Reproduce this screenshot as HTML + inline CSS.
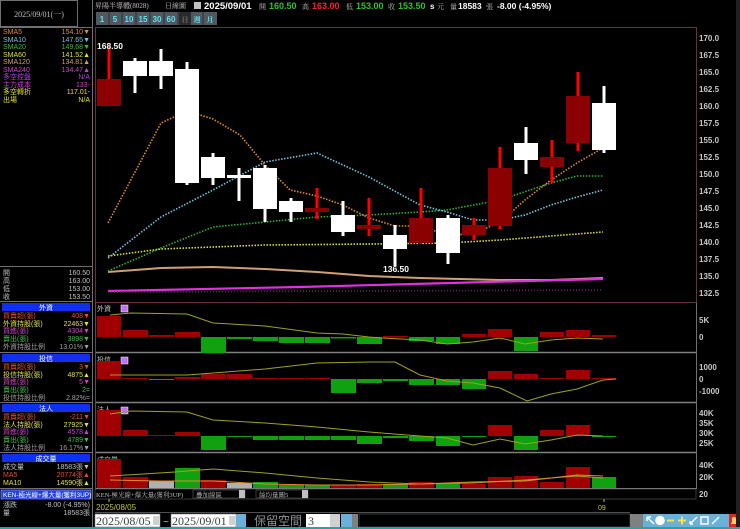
<!DOCTYPE html>
<html><head><meta charset="utf-8"><style>
html,body{margin:0;padding:0;background:#000;width:740px;height:529px;overflow:hidden}
svg{display:block}
text{font-family:"Liberation Sans","Noto Sans CJK TC",sans-serif}
.s{font-family:"Liberation Serif","Noto Serif CJK SC",serif;font-size:7px}
.ax{font-size:8px;font-weight:bold;fill:#c8c8c8}
</style></head><body>
<svg width="740" height="529" viewBox="0 0 740 529" xmlns="http://www.w3.org/2000/svg">
<rect width="740" height="529" fill="#000"/>
<!-- LEFT PANEL -->
<rect x="0.5" y="0.5" width="77" height="26" fill="#000" stroke="#707070"/>
<text x="39" y="17" class="s" fill="#c0c0c0" text-anchor="middle" style="font-size:8px">2025/09/01(一)</text>
<line x1="92.5" y1="0" x2="92.5" y2="529" stroke="#707070"/>
<line x1="0" y1="27.5" x2="92" y2="27.5" stroke="#707070"/>
<g class="s">
<text x="3" y="34" fill="#e08a2a">SMA5</text><text x="90" y="34" fill="#e08a2a" text-anchor="end">154.10▼</text>
<text x="3" y="42" fill="#6ec5e0">SMA10</text><text x="90" y="42" fill="#6ec5e0" text-anchor="end">147.65▼</text>
<text x="3" y="49" fill="#2ec02e">SMA20</text><text x="90" y="49" fill="#2ec02e" text-anchor="end">149.68▼</text>
<text x="3" y="57" fill="#e0e030">SMA60</text><text x="90" y="57" fill="#e0e030" text-anchor="end">141.52▲</text>
<text x="3" y="64" fill="#d0a070">SMA120</text><text x="90" y="64" fill="#d0a070" text-anchor="end">134.81▲</text>
<text x="3" y="72" fill="#d040d0">SMA240</text><text x="90" y="72" fill="#d040d0" text-anchor="end">134.47▲</text>
<text x="3" y="79" fill="#b040e0">多空控盤</text><text x="90" y="79" fill="#b040e0" text-anchor="end">N/A</text>
<text x="3" y="87" fill="#d040d0">主力成本</text><text x="90" y="87" fill="#d040d0" text-anchor="end">133-</text>
<text x="3" y="94" fill="#e0e030">多空轉折</text><text x="90" y="94" fill="#e0e030" text-anchor="end">117.01-</text>
<text x="3" y="102" fill="#e0e030">出場</text><text x="90" y="102" fill="#e0e030" text-anchor="end">N/A</text>
</g>
<line x1="0" y1="266.5" x2="92" y2="266.5" stroke="#707070"/>
<g class="s" fill="#c0c0c0">
<text x="3" y="275">開</text><text x="90" y="275" text-anchor="end">160.50</text>
<text x="3" y="283">高</text><text x="90" y="283" text-anchor="end">163.00</text>
<text x="3" y="291">低</text><text x="90" y="291" text-anchor="end">153.00</text>
<text x="3" y="299">收</text><text x="90" y="299" text-anchor="end">153.50</text>
</g>
<g class="s">
<line x1="0" y1="301.5" x2="92" y2="301.5" stroke="#707070"/>
<rect x="2" y="303" width="88" height="8" fill="#1030f0"/><text x="46" y="310" fill="#fff" text-anchor="middle">外資</text>
<text x="3" y="318" fill="#e05030">買賣超(張)</text><text x="90" y="318" fill="#e05030" text-anchor="end">408▼</text>
<text x="3" y="326" fill="#e0e040">外資持股(張)</text><text x="90" y="326" fill="#e0e040" text-anchor="end">22463▼</text>
<text x="3" y="333" fill="#d040d0">買進(張)</text><text x="90" y="333" fill="#d040d0" text-anchor="end">4304▼</text>
<text x="3" y="341" fill="#40c040">賣出(張)</text><text x="90" y="341" fill="#40c040" text-anchor="end">3898▼</text>
<text x="3" y="349" fill="#a0a0a0">外資持股比例</text><text x="90" y="349" fill="#a0a0a0" text-anchor="end">13.01%▼</text>
<line x1="0" y1="352.5" x2="92" y2="352.5" stroke="#707070"/>
<rect x="2" y="354" width="88" height="8" fill="#1030f0"/><text x="46" y="361" fill="#fff" text-anchor="middle">投信</text>
<text x="3" y="369" fill="#e05030">買賣超(張)</text><text x="90" y="369" fill="#e05030" text-anchor="end">3▼</text>
<text x="3" y="377" fill="#e0e040">投信持股(張)</text><text x="90" y="377" fill="#e0e040" text-anchor="end">4875▲</text>
<text x="3" y="384" fill="#d040d0">買進(張)</text><text x="90" y="384" fill="#d040d0" text-anchor="end">5▼</text>
<text x="3" y="392" fill="#40c040">賣出(張)</text><text x="90" y="392" fill="#40c040" text-anchor="end">2=</text>
<text x="3" y="400" fill="#a0a0a0">投信持股比例</text><text x="90" y="400" fill="#a0a0a0" text-anchor="end">2.82%=</text>
<line x1="0" y1="402.5" x2="92" y2="402.5" stroke="#707070"/>
<rect x="2" y="404" width="88" height="8" fill="#1030f0"/><text x="46" y="411" fill="#fff" text-anchor="middle">法人</text>
<text x="3" y="419" fill="#e05030">買賣超(張)</text><text x="90" y="419" fill="#e05030" text-anchor="end">-211▼</text>
<text x="3" y="427" fill="#e0e040">法人持股(張)</text><text x="90" y="427" fill="#e0e040" text-anchor="end">27925▼</text>
<text x="3" y="434" fill="#d040d0">買進(張)</text><text x="90" y="434" fill="#d040d0" text-anchor="end">4578▲</text>
<text x="3" y="442" fill="#40c040">賣出(張)</text><text x="90" y="442" fill="#40c040" text-anchor="end">4789▼</text>
<text x="3" y="450" fill="#a0a0a0">法人持股比例</text><text x="90" y="450" fill="#a0a0a0" text-anchor="end">16.17%▼</text>
<line x1="0" y1="452.5" x2="92" y2="452.5" stroke="#707070"/>
<rect x="2" y="454" width="88" height="8" fill="#1030f0"/><text x="46" y="461" fill="#fff" text-anchor="middle">成交量</text>
<text x="3" y="469" fill="#c0c0c0">成交量</text><text x="90" y="469" fill="#c0c0c0" text-anchor="end">18583張▼</text>
<text x="3" y="477" fill="#e05030">MA5</text><text x="90" y="477" fill="#e05030" text-anchor="end">20774張▲</text>
<text x="3" y="485" fill="#e0e040">MA10</text><text x="90" y="485" fill="#e0e040" text-anchor="end">14590張▲</text>
<line x1="0" y1="488.5" x2="92" y2="488.5" stroke="#707070"/>
<rect x="1" y="490" width="90" height="9" fill="#2040e0" stroke="#a0a0ff" stroke-width="0.6"/>
<text x="3" y="497" fill="#fff" style="font-size:6.5px">KEN-極光線+爆大量(獲利3UP)</text>
<text x="3" y="507" fill="#c0c0c0">漲跌</text><text x="90" y="507" fill="#c0c0c0" text-anchor="end">-8.00 (-4.95%)</text>
<text x="3" y="515" fill="#c0c0c0">量</text><text x="90" y="515" fill="#c0c0c0" text-anchor="end">18583張</text>
</g>
<!-- TOP BAR -->
<g font-size="8">
<text x="95" y="8" class="s" fill="#c0c0c0">昇陽半導體(8028)</text>
<text x="165" y="8" class="s" fill="#c0c0c0">日線圖</text>
<rect x="194" y="2" width="7" height="7" fill="#c0c0c0"/>
<text x="204" y="9" fill="#fff" font-weight="bold" font-size="9.5">2025/09/01</text>
<text x="259" y="9" class="s" fill="#c0c0c0">開</text><text x="269" y="9" fill="#2ec02e" font-weight="bold" font-size="9">160.50</text>
<text x="302" y="9" class="s" fill="#c0c0c0">高</text><text x="312" y="9" fill="#ff2020" font-weight="bold" font-size="9">163.00</text>
<text x="346" y="9" class="s" fill="#c0c0c0">低</text><text x="356" y="9" fill="#2ec02e" font-weight="bold" font-size="9">153.00</text>
<text x="388" y="9" class="s" fill="#c0c0c0">收</text><text x="398" y="9" fill="#2ec02e" font-weight="bold" font-size="9">153.50</text>
<text x="430" y="9" fill="#fff" font-weight="bold" font-size="8">s</text><text x="437" y="9" class="s" fill="#c0c0c0">元</text>
<text x="450" y="9" class="s" fill="#c0c0c0">量</text><text x="458" y="9" fill="#fff" font-weight="bold" font-size="8.5">18583</text>
<text x="486" y="9" class="s" fill="#c0c0c0">張</text>
<text x="497" y="9" fill="#fff" font-weight="bold" font-size="8.5">-8.00 (-4.95%)</text>
</g>
<g font-size="8" font-weight="bold" text-anchor="middle">
<rect x="96" y="12" width="121" height="13" fill="#505860"/>
<rect x="179" y="12" width="12" height="13" fill="#2a2a2a"/>
<g stroke="#2a3038" stroke-width="1"><line x1="109" y1="12" x2="109" y2="25"/><line x1="122" y1="12" x2="122" y2="25"/><line x1="136" y1="12" x2="136" y2="25"/><line x1="150" y1="12" x2="150" y2="25"/><line x1="164" y1="12" x2="164" y2="25"/><line x1="178" y1="12" x2="178" y2="25"/><line x1="203" y1="12" x2="203" y2="25"/></g>
<text x="102" y="22" fill="#60e0f0">1</text><text x="115" y="22" fill="#60e0f0">5</text><text x="129" y="22" fill="#60e0f0">10</text><text x="143" y="22" fill="#60e0f0">15</text><text x="157" y="22" fill="#60e0f0">30</text><text x="171" y="22" fill="#60e0f0">60</text>
<text x="185" y="22" fill="#707070" class="s">日</text><text x="197" y="22" fill="#60e0f0" class="s">週</text><text x="210" y="22" fill="#60e0f0" class="s">月</text>
</g>
<!-- MAIN CHART FRAME -->
<rect x="95.5" y="27.5" width="601" height="275" fill="none" stroke="#6a3040"/>
<g class="ax">
<text x="699" y="41">170.0</text><text x="699" y="58">167.5</text><text x="699" y="75">165.0</text><text x="699" y="92">162.5</text>
<text x="699" y="109">160.0</text><text x="699" y="126">157.5</text><text x="699" y="143">155.0</text><text x="699" y="160">152.5</text>
<text x="699" y="177">150.0</text><text x="699" y="194">147.5</text><text x="699" y="211">145.0</text><text x="699" y="228">142.5</text>
<text x="699" y="245">140.0</text><text x="699" y="262">137.5</text><text x="699" y="279">135.0</text><text x="699" y="296">132.5</text>
</g>
<g fill="none" stroke-width="1.6">
<polyline stroke="#d0a070" stroke-width="2" points="108,272 161,268 213,267 265,269 317,272 369,276 420,278 500,280 551,280 603,278"/>
<polyline stroke="#e030e0" stroke-width="2.2" points="108,291 300,287 450,283 603,279"/>
<polyline stroke="#702070" stroke-dasharray="1,2" points="108,292 603,290"/>
<polyline stroke="#e0e030" stroke-dasharray="1.5,1.5" points="108,256 161,249 265,245 369,244 447,243 500,240 551,236 603,232"/>
<polyline stroke="#30b030" stroke-dasharray="1.5,1.5" points="108,271 161,248 213,227 265,222 317,217 369,215 420,212 447,210 500,200 551,183 577,176 603,176"/>
<polyline stroke="#6ec5e0" stroke-dasharray="1.5,1.5" points="108,258 161,217 213,190 265,162 317,153 369,177 420,205 447,212 473,220 500,220 525,215 551,205 577,197 603,190"/>
<polyline stroke="#e08a2a" stroke-dasharray="1.5,1.5" points="108,223 161,123 187,111 213,119 240,135 265,165 290,190 317,196 343,205 369,218 395,226 420,226 447,235 473,234 500,222 525,200 551,180 577,163 603,148"/>
</g>
<g>
<rect x="107.5" y="47" width="3" height="32" fill="#f00"/><rect x="97" y="79" width="24" height="27" fill="#8b0000"/>
<rect x="133.5" y="58" width="3" height="35" fill="#fff"/><rect x="123" y="61" width="24" height="15" fill="#fff"/>
<rect x="159.5" y="49" width="3" height="40" fill="#fff"/><rect x="149" y="61" width="24" height="15" fill="#fff"/>
<rect x="185.5" y="62" width="3" height="123" fill="#fff"/><rect x="175" y="69" width="24" height="114" fill="#fff"/>
<rect x="211.5" y="153" width="3" height="32" fill="#fff"/><rect x="201" y="157" width="24" height="21" fill="#fff"/>
<rect x="237.5" y="168" width="3" height="33" fill="#fff"/><rect x="227" y="175" width="24" height="3" fill="#fff"/>
<rect x="263.5" y="165" width="3" height="57" fill="#fff"/><rect x="253" y="168" width="24" height="41" fill="#fff"/>
<rect x="289.5" y="198" width="3" height="24" fill="#fff"/><rect x="279" y="201" width="24" height="11" fill="#fff"/>
<rect x="315.5" y="188" width="3" height="31" fill="#f00"/><rect x="305" y="208" width="24" height="4" fill="#8b0000"/>
<rect x="341.5" y="201" width="3" height="35" fill="#fff"/><rect x="331" y="215" width="24" height="17" fill="#fff"/>
<rect x="367.5" y="198" width="3" height="38" fill="#f00"/><rect x="357" y="225" width="24" height="4" fill="#8b0000"/>
<rect x="393.5" y="225" width="3" height="41" fill="#fff"/><rect x="383" y="235" width="24" height="14" fill="#fff"/>
<rect x="419.5" y="188" width="3" height="56" fill="#f00"/><rect x="409" y="218" width="24" height="25" fill="#8b0000"/>
<rect x="446.5" y="215" width="3" height="49" fill="#fff"/><rect x="436" y="218" width="24" height="35" fill="#fff"/>
<rect x="472.5" y="218" width="3" height="22" fill="#f00"/><rect x="462" y="225" width="24" height="10" fill="#8b0000"/>
<rect x="498.5" y="147" width="3" height="82" fill="#f00"/><rect x="488" y="168" width="24" height="58" fill="#8b0000"/>
<rect x="524.5" y="127" width="3" height="47" fill="#fff"/><rect x="514" y="143" width="24" height="17" fill="#fff"/>
<rect x="550.5" y="140" width="3" height="43" fill="#f00"/><rect x="540" y="157" width="24" height="10" fill="#8b0000"/>
<rect x="576.5" y="72" width="3" height="79" fill="#f00"/><rect x="566" y="96" width="24" height="47" fill="#8b0000"/>
<rect x="602.5" y="86" width="3" height="67" fill="#fff"/><rect x="592" y="103" width="24" height="47" fill="#fff"/>
</g>
<text x="97" y="49" fill="#fff" font-size="8.5" font-weight="bold">168.50</text>
<text x="383" y="272" fill="#fff" font-size="8.5" font-weight="bold">136.50</text>
<g stroke="#808080" stroke-width="1.5">
<line x1="95" y1="352.5" x2="697" y2="352.5"/><line x1="95" y1="402.5" x2="697" y2="402.5"/><line x1="95" y1="452.5" x2="697" y2="452.5"/>
</g>
<line x1="95" y1="488.5" x2="697" y2="488.5" stroke="#808080"/>
<line x1="696.5" y1="303" x2="696.5" y2="489" stroke="#707070"/>
<line x1="95.5" y1="303" x2="95.5" y2="489" stroke="#505050"/>
<g class="ax">
<text x="699" y="323">5K</text><text x="699" y="340">0</text>
<text x="699" y="370">1000</text><text x="699" y="382">0</text><text x="699" y="394">-1000</text>
<text x="699" y="416">40K</text><text x="699" y="426">35K</text><text x="699" y="436">30K</text><text x="699" y="446">25K</text>
<text x="699" y="468">40K</text><text x="699" y="480">20K</text><text x="699" y="497">20</text>
</g>
<g class="s" fill="#c0c0c0"><text x="97" y="311">外資</text><text x="97" y="362">投信</text><text x="97" y="412">法人</text><text x="97" y="462">成交量</text></g>
<g fill="#c070f0" stroke="#fff" stroke-width="0.5"><rect x="121" y="305" width="7" height="7"/><rect x="121" y="357" width="7" height="7"/><rect x="121" y="407" width="7" height="7"/></g>
<g fill="#a00000">
<rect x="97" y="316" width="24" height="21"/><rect x="123" y="330" width="25" height="7"/><rect x="149" y="335" width="25" height="2"/><rect x="175" y="332" width="25" height="5"/>
<rect x="383" y="336" width="25" height="1.5"/><rect x="462" y="334" width="24" height="3"/><rect x="488" y="329" width="24" height="8"/><rect x="540" y="332" width="24" height="5"/><rect x="566" y="330" width="24" height="7"/><rect x="592" y="335" width="24" height="2"/>
</g>
<g fill="#10a010">
<rect x="201" y="337" width="25" height="16"/><rect x="227" y="337" width="25" height="2"/><rect x="253" y="337" width="25" height="4"/><rect x="279" y="337" width="25" height="6"/><rect x="305" y="337" width="25" height="6"/><rect x="331" y="337" width="25" height="1.5"/><rect x="357" y="337" width="25" height="7"/><rect x="409" y="337" width="25" height="4"/><rect x="436" y="337" width="24" height="7"/><rect x="514" y="337" width="24" height="14"/>
</g>
<polyline fill="none" stroke="#a0a020" stroke-width="1" points="110,315 131,313 187,314 213,323 265,326 317,333 343,334 369,337 382,338 420,340 447,344 473,342 500,338 525,344 551,340 577,338 603,339"/>
<g fill="#a00000">
<rect x="97" y="361" width="24" height="18"/><rect x="123" y="378" width="25" height="1"/><rect x="175" y="377" width="25" height="2"/><rect x="201" y="374" width="25" height="5"/><rect x="227" y="374" width="25" height="5"/><rect x="253" y="378" width="25" height="1"/><rect x="279" y="378" width="25" height="1"/><rect x="305" y="378" width="25" height="1"/>
<rect x="488" y="371" width="24" height="8"/><rect x="514" y="374" width="24" height="5"/><rect x="540" y="378" width="24" height="1"/><rect x="566" y="370" width="24" height="9"/><rect x="592" y="378" width="24" height="1"/>
</g>
<g fill="#10a010">
<rect x="149" y="379" width="25" height="1"/><rect x="331" y="379" width="25" height="14"/><rect x="357" y="379" width="25" height="4"/><rect x="383" y="379" width="25" height="2"/><rect x="409" y="379" width="25" height="6"/><rect x="436" y="379" width="24" height="6"/><rect x="462" y="379" width="24" height="10"/>
</g>
<polyline fill="none" stroke="#a0a020" stroke-width="1" points="110,375 187,375 265,369 317,363 369,362 395,362 420,375 447,381 473,383 500,388 527,401 551,394 577,389 603,380 616,379"/>
<g fill="#a00000">
<rect x="97" y="410" width="24" height="26"/><rect x="123" y="430" width="25" height="6"/><rect x="149" y="435" width="25" height="1"/><rect x="175" y="432" width="25" height="4"/>
<rect x="488" y="425" width="24" height="11"/><rect x="540" y="430" width="24" height="6"/><rect x="566" y="425" width="24" height="11"/>
</g>
<g fill="#10a010">
<rect x="201" y="436" width="25" height="14"/><rect x="227" y="436" width="25" height="1"/><rect x="253" y="436" width="25" height="4"/><rect x="279" y="436" width="25" height="4"/><rect x="305" y="436" width="25" height="4"/><rect x="331" y="436" width="25" height="4"/><rect x="357" y="436" width="25" height="8"/><rect x="383" y="436" width="25" height="2"/><rect x="409" y="436" width="25" height="5"/><rect x="436" y="436" width="24" height="10"/><rect x="462" y="436" width="24" height="1"/><rect x="514" y="436" width="24" height="14"/><rect x="592" y="436" width="24" height="1"/>
</g>
<polyline fill="none" stroke="#a0a020" stroke-width="1" points="110,414 131,411 187,412 213,420 265,423 317,427 369,432 420,436 447,438 473,445 500,439 525,444 551,440 577,435 603,436"/>
<g fill="#a00000">
<rect x="97" y="459" width="24" height="29"/><rect x="123" y="477" width="25" height="11"/><rect x="201" y="480" width="25" height="8"/><rect x="331" y="485" width="25" height="3"/><rect x="357" y="484" width="25" height="4"/><rect x="409" y="482" width="25" height="6"/><rect x="462" y="484" width="24" height="4"/><rect x="488" y="477" width="24" height="11"/><rect x="514" y="476" width="24" height="12"/><rect x="540" y="482" width="24" height="6"/><rect x="566" y="467" width="24" height="21"/>
</g>
<g fill="#10a010">
<rect x="175" y="468" width="25" height="20"/><rect x="253" y="482" width="25" height="6"/><rect x="279" y="485" width="25" height="3"/><rect x="305" y="485" width="25" height="3"/><rect x="383" y="484" width="25" height="4"/><rect x="436" y="483" width="24" height="5"/><rect x="592" y="477" width="24" height="11"/>
</g>
<g fill="#b0b0b0"><rect x="149" y="481" width="25" height="7"/><rect x="227" y="483" width="25" height="5"/></g>
<polyline fill="none" stroke="#a0a020" stroke-width="1" points="110,476 175,472 213,469 265,473 317,478 369,482 420,484 473,483 525,480 577,476 603,478"/>
<polyline fill="none" stroke="#e08a2a" stroke-width="1" points="110,480 161,481 213,481 265,484 317,485 369,485 420,484 473,482 525,481 577,475 603,476"/>
<rect x="95" y="489" width="601" height="10" fill="#000" stroke="#606060" stroke-width="0.6"/>
<text x="96" y="497" class="s" fill="#c0c0c0" style="font-size:6.5px">KEN-極光線+爆大量(獲利3UP)</text>
<rect x="193" y="490" width="52" height="8" fill="none" stroke="#606060" stroke-width="0.6"/><text x="196" y="497" class="s" fill="#c0c0c0" style="font-size:6.5px">疊加線區</text>
<rect x="239" y="490" width="6" height="8" fill="#c0c0c0"/>
<rect x="256" y="490" width="52" height="8" fill="none" stroke="#606060" stroke-width="0.6"/><text x="259" y="497" class="s" fill="#c0c0c0" style="font-size:6.5px">絲均量圖5</text>
<rect x="302" y="490" width="6" height="8" fill="#c0c0c0"/>
<line x1="109" y1="499" x2="109" y2="502" stroke="#c0c040"/>
<text x="96" y="510" fill="#c0c040" font-size="8">2025/08/05</text>
<line x1="604" y1="499" x2="604" y2="502" stroke="#c0c040"/>
<text x="598" y="510" fill="#c0c040" font-size="7">09</text>
<line x1="95" y1="512.5" x2="630" y2="512.5" stroke="#505050"/>
<rect x="95" y="514" width="65" height="13" fill="#fff" stroke="#808080" stroke-width="0.6"/>
<text x="96" y="525" class="s" fill="#404040" style="font-size:12px">2025/08/05</text>
<rect x="153" y="516" width="6" height="9" fill="#d0d0d0"/>
<text x="163" y="525" fill="#c0c0c0" font-size="10">~</text>
<rect x="171" y="514" width="65" height="13" fill="#fff" stroke="#808080" stroke-width="0.6"/>
<text x="172" y="525" class="s" fill="#404040" style="font-size:12px">2025/09/01</text>
<rect x="229" y="516" width="6" height="9" fill="#d0d0d0"/>
<rect x="236" y="514" width="10" height="13" fill="#6ab0d8"/>
<text x="254" y="525" fill="#909090" font-size="12" font-family="Noto Sans CJK TC, sans-serif">保留空間</text>
<rect x="306" y="514" width="34" height="13" fill="#fff"/>
<text x="308" y="525" class="s" fill="#404040" style="font-size:12px">3</text>
<rect x="330" y="514" width="10" height="13" fill="#d0d0d0"/>
<rect x="341" y="514" width="11" height="13" fill="#6ab0d8"/>
<rect x="352" y="514" width="6" height="13" fill="#808080"/>
<rect x="359" y="514" width="271" height="13" fill="#000" stroke="#606060" stroke-width="0.6"/>
<rect x="630" y="514" width="13" height="13" fill="#808080"/>
<rect x="643" y="514" width="86" height="13" fill="#6ab0d8"/>
<g stroke="#fff" stroke-width="1.5" fill="none">
<path d="M647 517 L654 524 M647 517 h4 M647 517 v4"/>
<circle cx="660" cy="520.5" r="4" fill="#fff"/>
<path d="M667 520.5 h7" stroke="#ffe040" stroke-width="2"/>
<path d="M678 520.5 h8 M682 516.5 v8" stroke="#ffe040" stroke-width="2"/>
<path d="M690 524 L697 517 M690 524 h3 M690 524 v-3"/>
<rect x="701" y="517" width="7" height="7"/>
<path d="M712 524 L719 517"/>
</g>
<rect x="729" y="514" width="10" height="13" fill="#d03020"/>
<path d="M731 524 h6 l-1-2 v-3 a2 2 0 0 0-4 0 v3z" fill="#ffd060"/>
<rect x="0" y="527" width="740" height="2" fill="#30a0a0"/>
<rect x="736" y="0" width="4" height="527" fill="#202020"/>
</svg>
</body></html>
